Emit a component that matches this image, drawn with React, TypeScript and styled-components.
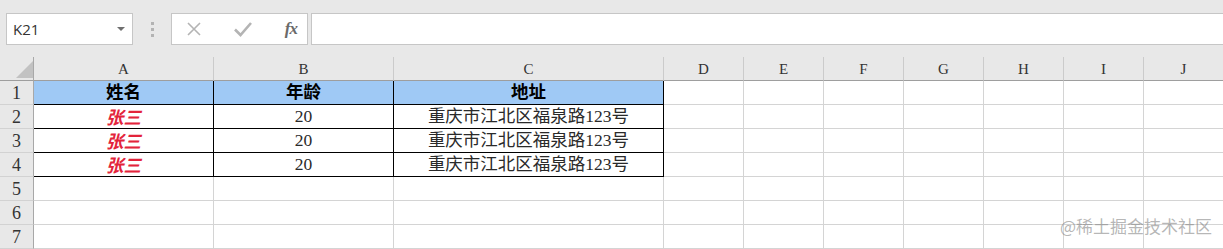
import styled, { createGlobalStyle } from "styled-components";

const GlobalStyle = createGlobalStyle`
  html, body {
    margin: 0;
    padding: 0;
    background: #e8e8e8;
    overflow: hidden;
  }
  body {
    font-family: "Liberation Serif", "Noto Sans CJK SC", serif;
  }
`;

const Page = styled.div`
  position: relative;
  width: 1223px;
  height: 249px;
  overflow: hidden;
  background: #e8e8e8;
`;

const Toolbar = styled.div`
  height: 57px;
  box-sizing: border-box;
  padding: 13px 0 0 6px;
  display: flex;
  align-items: flex-start;
`;

const Box = styled.div`
  height: 32px;
  box-sizing: border-box;
  background: #fff;
  border: 1px solid #c6c6c6;
  display: flex;
  align-items: center;
`;

const NameBox = styled(Box)`
  width: 127px;
  padding: 0 7px 0 6px;
  justify-content: space-between;
  font-family: "Open Sans", "Liberation Sans", sans-serif;
  font-size: 15px;
  color: #333;
`;

const Caret = styled.span`
  width: 0;
  height: 0;
  border-left: 4px solid transparent;
  border-right: 4px solid transparent;
  border-top: 4px solid #6f6f6f;
`;

const Grip = styled.div`
  width: 38px;
  height: 32px;
  display: flex;
  flex-direction: column;
  align-items: center;
  justify-content: center;
  gap: 3px;

  span {
    width: 3px;
    height: 3px;
    background: #b3b3b3;
  }
`;

const FormulaButtons = styled(Box)`
  width: 137px;
  padding: 0 10px 0 14px;
  justify-content: space-between;
`;

const FxLabel = styled.span`
  font-family: "Liberation Serif", serif;
  font-style: italic;
  font-weight: bold;
  font-size: 17px;
  color: #6a6a6a;
  letter-spacing: -1px;
`;

const FormulaInput = styled(Box)`
  flex: 1;
  margin-left: 3px;
  border-right: none;
`;

const Sheet = styled.div`
  display: grid;
  grid-template-columns: 34px 180px 180px 270px repeat(7, 80px);
  grid-auto-rows: 24px;
  background: #fff;
`;

const Corner = styled.div`
  box-sizing: border-box;
  background: #e8e8e8;
  border-right: 1px solid #a8a8a8;
  border-bottom: 1px solid #9e9e9e;
  display: flex;
  justify-content: flex-end;
  align-items: flex-end;
  padding-bottom: 2px;
`;

const ColHead = styled.div`
  box-sizing: border-box;
  background: #e8e8e8;
  border-right: 1px solid #cbcbcb;
  border-bottom: 1px solid #9e9e9e;
  display: flex;
  align-items: center;
  justify-content: center;
  font-family: "Liberation Serif", serif;
  font-size: 15px;
  color: #333;
  padding-top: 1px;
`;

const RowHead = styled.div`
  box-sizing: border-box;
  background: #e8e8e8;
  border-right: 1px solid #a8a8a8;
  border-bottom: 1px solid #d2d2d2;
  display: flex;
  align-items: center;
  justify-content: center;
  font-family: "Liberation Serif", serif;
  font-size: 18px;
  color: #333;
  padding-top: 1px;
`;

type Kind = "plain" | "head" | "name";

const Cell = styled.div<{ $boxed?: boolean; $fill?: string; $kind?: Kind }>`
  box-sizing: border-box;
  background: ${({ $fill }) => $fill ?? "#fff"};
  border-right: 1px solid ${({ $boxed }) => ($boxed ? "#000" : "#d4d4d4")};
  border-bottom: 1px solid ${({ $boxed }) => ($boxed ? "#000" : "#d4d4d4")};
  display: flex;
  align-items: center;
  justify-content: center;
  white-space: nowrap;
  font-family: ${({ $kind }) =>
    $kind === "name"
      ? `"Noto Sans CJK SC", sans-serif`
      : `"Liberation Serif", "Noto Sans CJK SC", serif`};
  font-size: 17.5px;
  font-weight: ${({ $kind }) => ($kind === "plain" ? 400 : 700)};
  font-style: ${({ $kind }) => ($kind === "name" ? "italic" : "normal")};
  color: ${({ $kind }) => ($kind === "name" ? "#e3243b" : $kind === "head" ? "#000" : "#2a2a2a")};
  line-height: 1;
  padding-top: 1px;
`;

const Watermark = styled.div`
  position: absolute;
  right: 11px;
  bottom: 11px;
  font-family: "Noto Sans CJK SC", sans-serif;
  font-size: 17px;
  color: rgba(120, 120, 120, 0.55);
`;

const columns = ["A", "B", "C", "D", "E", "F", "G", "H", "I", "J"];

const data: { values: string[]; kinds: Kind[]; fill?: string }[] = [
  { values: ["姓名", "年龄", "地址"], kinds: ["head", "head", "head"], fill: "#9fc9f5" },
  { values: ["张三", "20", "重庆市江北区福泉路123号"], kinds: ["name", "plain", "plain"] },
  { values: ["张三", "20", "重庆市江北区福泉路123号"], kinds: ["name", "plain", "plain"] },
  { values: ["张三", "20", "重庆市江北区福泉路123号"], kinds: ["name", "plain", "plain"] },
];

const XIcon = () => (
  <svg width="16" height="16" viewBox="0 0 16 16">
    <path d="M2 2 L14 14 M14 2 L2 14" stroke="#b4b4b4" strokeWidth="1.6" fill="none" />
  </svg>
);

const CheckIcon = () => (
  <svg width="18" height="16" viewBox="0 0 18 16">
    <path d="M1 8.5 L6.5 14 L17 2" stroke="#b4b4b4" strokeWidth="2.6" fill="none" />
  </svg>
);

const CornerTriangle = () => (
  <svg width="17" height="17" viewBox="0 0 17 17">
    <polygon points="17,0 17,17 0,17" fill="#c2c2c2" />
  </svg>
);

export default function App() {
  return (
    <>
      <GlobalStyle />
      <Page>
        <Toolbar>
          <NameBox>
            K21
            <Caret />
          </NameBox>
          <Grip>
            <span />
            <span />
            <span />
          </Grip>
          <FormulaButtons>
            <XIcon />
            <CheckIcon />
            <FxLabel>fx</FxLabel>
          </FormulaButtons>
          <FormulaInput />
        </Toolbar>
        <Sheet>
          <Corner>
            <CornerTriangle />
          </Corner>
          {columns.map((c) => (
            <ColHead key={c}>{c}</ColHead>
          ))}
          {Array.from({ length: 7 }, (_, r) => {
            const row = data[r];
            return [
              <RowHead key={`h${r}`}>{r + 1}</RowHead>,
              ...columns.map((c, ci) => {
                const inTable = row && ci < 3;
                return (
                  <Cell
                    key={`${r}-${c}`}
                    $boxed={!!inTable}
                    $fill={inTable ? row.fill : undefined}
                    $kind={inTable ? row.kinds[ci] : "plain"}
                  >
                    {inTable ? row.values[ci] : ""}
                  </Cell>
                );
              }),
            ];
          })}
        </Sheet>
        <Watermark>@稀土掘金技术社区</Watermark>
      </Page>
    </>
  );
}
